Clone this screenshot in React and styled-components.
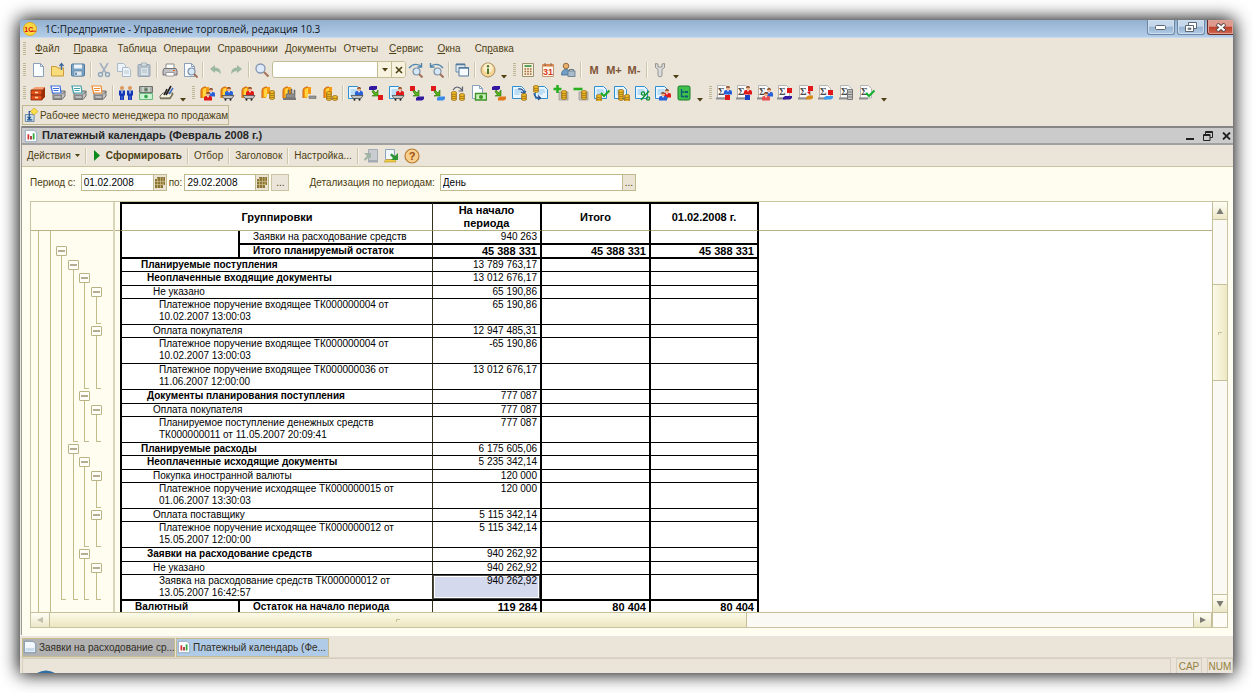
import React, { useState } from "react"
import styled, { createGlobalStyle, css } from "styled-components"

const GlobalStyle = createGlobalStyle`
  * { box-sizing: border-box; }
  body {
    margin: 0;
    background: #ffffff;
    overflow: hidden;
    font-family: "Liberation Sans", Arial, sans-serif;
    font-size: 10px;
    color: #4d3f12;
  }
  button, input {
    font: inherit;
    color: inherit;
    margin: 0;
    padding: 0;
    border: 0;
    border-radius: 0;
    background: none;
  }
`

const Desktop = styled.div`
  height: 100vh;
  padding: 20px;
`

const Window = styled.div`
  height: 100%;
  display: flex;
  flex-direction: column;
  overflow: hidden;
  background: #ebe4d9;
  box-shadow: 0 0 17px 1px #000000;
`

/* ---------- title bar ---------- */

const TitleBar = styled.header`
  flex: none;
  height: 18px;
  display: flex;
  align-items: center;
  padding-left: 3px;
  background: linear-gradient(#93b0d0, #b3cde8);
  border-bottom: 1px solid #c9dcef;
`

const WindowTitle = styled.h1`
  flex: 1;
  margin: 0 0 0 8px;
  font-family: "Open Sans", "Noto Sans", sans-serif;
  font-size: 10px;
  line-height: 16px;
  font-weight: 400;
  color: #10151c;
`

const WindowButton = styled.button`
  width: 28px;
  height: 15px;
  margin-right: 2px;
  align-self: flex-start;
  display: flex;
  align-items: center;
  justify-content: center;
  border: 1px solid #6c87a6;
  border-top: 0;
  border-radius: 0 0 3px 3px;
  background: linear-gradient(#c5d8ec 45%, #98b3d1 50%, #b2cce6);
  box-shadow: inset 0 0 0 1px #cfdff0;
  ${({ $close }) =>
    $close &&
    css`
      width: 26px;
      margin-right: 0;
      border-color: #6b2a25;
      border-right: 0;
      border-radius: 0 0 0 3px;
      background: linear-gradient(#dd9a8d 45%, #bd3f28 50%, #d0694f);
      box-shadow: inset 0 0 0 1px #dfa297;
    `}
`

/* ---------- menus and toolbars ---------- */

const MenuBar = styled.nav`
  flex: none;
  height: 20px;
  display: flex;
  align-items: center;
`

const MenuItem = styled.button`
  height: 17px;
  padding: 0 4px 0 3px;
  white-space: nowrap;
  ${({ $accel }) => $accel && `padding: 0 7px;`}
`

const Toolbar = styled.div`
  flex: none;
  height: 23px;
  display: flex;
  align-items: center;
`

const Grip = styled.span`
  flex: none;
  width: 8px;
  height: 13px;
  border: solid transparent;
  border-width: 0 2px 0 3px;
  background: repeating-linear-gradient(#bdb798 0 1px, #ebe4d9 1px 2px) padding-box;
`

const Separator = styled.span`
  flex: none;
  width: 6px;
  height: 16px;
  border: solid transparent;
  border-width: 0 2px;
  background: linear-gradient(90deg, #cbc7ac 50%, #f8f5ec 50%) padding-box;
`

const IconGroup = styled.div`
  display: flex;
  align-items: center;
`

const IconButton = styled.button`
  flex: none;
  width: 20px;
  height: 20px;
  padding: 2px;
  display: flex;
  ${({ $loose }) =>
    $loose &&
    css`
      &:nth-of-type(even) {
        width: 21px;
      }
    `}
`

const MemoryButton = styled.button`
  width: 20px;
  height: 20px;
  font-size: 11px;
  font-weight: 700;
  color: #7f5535;
`

const MoreButton = styled.button`
  width: 12px;
  height: 20px;
  display: flex;
  align-items: flex-end;
  justify-content: center;
  padding-bottom: 1px;
`

const SearchBox = styled.div`
  width: 134px;
  height: 17px;
  display: flex;
  border: 1px solid #c3bd95;
  border-radius: 3px;
  background: #ffffff;
  overflow: hidden;
`

const SearchInput = styled.input`
  flex: 1;
  min-width: 0;
  padding: 0 3px;
  outline: none;
`

const SearchButton = styled.button`
  width: 14px;
  display: flex;
  align-items: center;
  justify-content: center;
  background: #f7f3df;
  border-left: 1px solid #c3bd95;
`

const QuickPanel = styled.div`
  flex: none;
  height: 22px;
  padding: 1px 0 0 2px;
`

const QuickButton = styled.button`
  height: 20px;
  display: flex;
  align-items: center;
  gap: 2px;
  padding: 0 0 0 1px;
  border: 1px solid #c0b98e;
  white-space: nowrap;
`

/* ---------- report window ---------- */

const ReportWindow = styled.section`
  flex: 1;
  min-height: 0;
  display: flex;
  flex-direction: column;
  margin-left: 1px;
  border-left: 1px solid #9b9b9b;
  background: #fffcf0;
`

const ReportTitle = styled.div`
  flex: none;
  height: 19px;
  display: flex;
  align-items: center;
  gap: 4px;
  padding-left: 2px;
  background: #cbcbcb;
  border: solid #858585;
  border-width: 2px 0;
  border-bottom-color: #a0a0a0;
  color: #262626;
`

const ReportName = styled.h2`
  flex: 1;
  margin: 0;
  font-size: 11px;
  line-height: 15px;
  font-weight: 700;
`

const ReportTitleButton = styled.button`
  width: 14px;
  height: 14px;
  display: flex;
  align-items: center;
  justify-content: center;
`

const ReportToolbar = styled.div`
  flex: none;
  height: 22px;
  display: flex;
  align-items: center;
  padding-left: 2px;
  background: #ebe4d9;
  border-bottom: 1px solid #c9c49f;
`

const CommandButton = styled.button`
  height: 18px;
  display: flex;
  align-items: center;
  gap: 4px;
  padding: 0 3px;
  white-space: nowrap;
  ${({ $primary }) =>
    $primary &&
    css`
      font-weight: 700;
      gap: 5px;
      padding: 0 3px 0 5px;
    `}
`

const FilterForm = styled.form`
  flex: none;
  height: 34px;
  display: flex;
  align-items: center;
  padding: 0 0 3px 8px;
`

const FieldLabel = styled.label`
  white-space: nowrap;
  margin-right: ${({ $gap }) => $gap || "2px"};
`

const Field = styled.div`
  height: 17px;
  width: ${({ $width }) => $width};
  display: flex;
  margin-right: 2px;
  border: 1px solid #c0b98e;
  background: #ffffff;
`

const FieldInput = styled.input`
  flex: 1;
  min-width: 0;
  padding: 0 2px;
  color: #000000;
  outline: none;
`

const FieldButton = styled.button`
  width: 13px;
  display: flex;
  align-items: center;
  justify-content: center;
  background: #ebe4d4;
  border-left: 1px solid #c0b98e;
`

const PeriodButton = styled.button`
  width: 18px;
  height: 17px;
  margin-right: 20px;
  border: 1px solid #c9c3a4;
  background: #ebe4d9;
`

/* ---------- spreadsheet ---------- */

const Sheet = styled.div`
  flex: 1;
  min-height: 0;
  margin: 0 5px 7px 8px;
  display: grid;
  grid-template-columns: 84px 1fr 15px;
  grid-template-rows: minmax(0, 1fr) 15px;
  border: 1px solid #c9c49f;
`

const Gutter = styled.div`
  overflow: hidden;
  border-right: 2px solid #d9d6ba;
`

const GutterHead = styled.div`
  height: 29px;
  border-bottom: 1px solid #b9b184;
`

const OutlineRow = styled.div`
  height: ${({ $height }) => $height};
  padding-left: 7px;
  display: grid;
  grid-template-columns: 12px 11px 12px 11px 12px 11px;
`

const OutlineCell = styled.div`
  position: relative;
  &::before {
    content: "";
    position: absolute;
    top: ${({ $mark }) => ($mark === "-" ? "6px" : "0")};
    bottom: ${({ $mark }) => ($mark === "L" ? "1px" : "0")};
    left: 0;
    width: ${({ $mark }) => ($mark === "L" ? "4px" : "1px")};
    border-left: 1px solid #c2bb8a;
    ${({ $mark }) => $mark === "L" && `border-bottom: 1px solid #c2bb8a;`}
    ${({ $mark }) => $mark === " " && `display: none;`}
  }
`

const OutlineToggle = styled.button`
  position: absolute;
  left: -5px;
  top: 1px;
  width: 11px;
  height: 10px;
  display: flex;
  align-items: center;
  justify-content: center;
  border: 1px solid #b9b283;
  border-radius: 1px;
  background: #fffef8;
`

const Cells = styled.div`
  overflow: hidden;
  background: #ffffff;
`

const Table = styled.table`
  width: 100%;
  table-layout: fixed;
  border-collapse: separate;
  border-spacing: 0;
  line-height: 12px;
  color: #000000;
`

const Col = styled.col`
  width: ${({ $width }) => $width};
`

const HeadCell = styled.th`
  height: 29px;
  padding: 0 20px;
  font-size: 11px;
  line-height: 13px;
  font-weight: 700;
  border: solid #000000;
  border-width: 2px 2px 1px 0;
  border-bottom-color: #b9b184;
  ${({ $first }) => $first && `border-left-width: 2px; border-right-color: #33301c; border-right-width: 1px;`}
  ${({ $blank }) => $blank && `border-width: 0 0 1px; background: ${$blank};`}
`

const Cell = styled.td`
  height: ${({ $height }) => $height};
  padding: 0 3px 0 0;
  vertical-align: top;
  text-align: right;
  white-space: nowrap;
  font-size: ${({ $total }) => ($total ? "11px" : "10px")};
  font-weight: ${({ $total }) => ($total ? 700 : 400)};
  border: solid #000000;
  border-width: 0 2px 1px 0;
  ${({ $total, $thick }) => ($total || $thick) && `border-bottom-width: 2px;`}
  ${({ $selected }) =>
    $selected &&
    `background: #d4d9ee;
    box-shadow: inset 0 0 0 1px #4a4a4a, inset 0 0 0 2px #ffffff;`}
`

const LabelCell = styled(Cell)`
  text-align: left;
  padding-left: ${({ $indent }) => $indent};
  padding-right: 32px;
  white-space: normal;
  font-size: 10px;
  font-weight: ${({ $bold }) => ($bold ? 700 : 400)};
  border-left-width: ${({ $first }) => ($first ? "2px" : "0")};
  border-right-width: ${({ $narrow }) => ($narrow ? "2px" : "1px")};
  border-right-color: ${({ $narrow }) => ($narrow ? "#000000" : "#33301c")};
  ${({ $narrow, $solo }) => ($narrow || $solo) && `padding-right: 0; white-space: nowrap;`}
`

const RailCell = styled.td`
  padding: 0;
  background: ${({ $color }) => $color};
`

const ScrollBar = styled.div`
  display: flex;
  flex-direction: ${({ $vertical }) => ($vertical ? "column" : "row")};
  background: #faf9f4;
  border: solid #c5c09a;
  border-width: ${({ $vertical }) => ($vertical ? "0 0 0 1px" : "1px 0 0")};
  ${({ $vertical }) => !$vertical && `grid-column: 1 / 3;`}
`

const ScrollArrow = styled.button`
  flex: none;
  width: ${({ $vertical }) => ($vertical ? "14px" : "19px")};
  height: ${({ $vertical }) => ($vertical ? "18px" : "14px")};
  display: flex;
  align-items: center;
  justify-content: center;
  background: linear-gradient(#fffef5, #ebe7c8);
  border: solid #c5c09a;
  border-width: ${({ $vertical, $end }) =>
    $vertical ? ($end ? "1px 0 0" : "0 0 1px") : $end ? "0 1px" : "0 1px 0 0"};
`

const ScrollTrack = styled.div`
  flex: 1;
  min-height: 0;
  display: flex;
  flex-direction: ${({ $vertical }) => ($vertical ? "column" : "row")};
`

const ScrollThumb = styled.div`
  display: flex;
  align-items: center;
  justify-content: center;
  border: solid #c5c09a;
  ${({ $vertical }) =>
    $vertical
      ? `margin-top: 64px; height: 97px; border-width: 1px 0; background: linear-gradient(90deg, #fcfae8, #ece8c4);`
      : `width: 61%; border-width: 0 1px 0 0; background: linear-gradient(#fcfae8, #ebe6bf);`}
`

const Corner = styled.div`
  border: solid #c5c09a;
  border-width: 1px 0 0 1px;
  background: #fdfcf6;
`

/* ---------- window list and status bar ---------- */

const WindowList = styled.div`
  flex: none;
  height: 22px;
  display: flex;
  align-items: center;
  gap: 1px;
  padding: 1px 0 0 2px;
  border-top: 1px solid #fdfdfd;
`

const WindowTab = styled.button`
  width: 153px;
  height: 19px;
  display: flex;
  align-items: center;
  gap: 2px;
  border: 1px solid #c4bc8e;
  color: #302c22;
  background: ${({ $active }) => ($active ? "#b0cbe7" : "#b2b2b2")};
  white-space: nowrap;
`

const StatusBar = styled.footer`
  flex: none;
  height: 16px;
  display: flex;
  gap: 5px;
  padding-left: 2px;
  border-top: 1px solid #dbd4c7;
`

const StatusPanel = styled.div`
  width: 26px;
  display: flex;
  align-items: center;
  justify-content: center;
  color: #94813f;
  border: 1px solid #d6cfc0;
  border-bottom: 0;
  ${({ $wide }) =>
    $wide &&
    css`
      flex: 1;
      align-items: flex-end;
      justify-content: flex-start;
      padding-left: 14px;
    `}
`

/* ---------- icon parts ---------- */

const Svg = styled.svg`
  display: block;
  flex: none;
`

const Icon = ({ size = 16, children }) => (
  <Svg width={size} height={size} viewBox="0 0 16 16" fill="none" aria-hidden="true">
    {children}
  </Svg>
)

const Page = ({ x = 0, y = 0, stroke = "#8aa0b8", fill = "#fafdff" }) => (
  <g transform={`translate(${x} ${y})`}>
    <path d="M.5.5h7l3 3v10H.5z" fill={fill} stroke={stroke} />
    <path d="M7.5.5v3h3" stroke={stroke} />
  </g>
)

const BluePage = () => (
  <g>
    <path d="M.5 1.500h9l3 3v9H.5z" fill="#eaf6ff" stroke="#2f8fd0" />
    <path d="M2.500 5h7M2.500 7h8M2.500 9h5" stroke="#8cc4ea" />
  </g>
)

const Person = ({ x, y, color }) => (
  <g transform={`translate(${x} ${y})`}>
    <path d="M0 8.500V5.500Q0 4 2 4h4q2 0 2 1.500v3z" fill={color} />
    <path d="M3 4h2L4 6z" fill="#fff" />
    <circle cx="4" cy="2.200" r="1.900" fill="#f0b48a" />
    <path d="M2 2Q2 0 4 0t2 2q-2-1-4 0z" fill="#7a3d1c" />
  </g>
)

const Coins = ({ x, y, n = 3 }) => (
  <g transform={`translate(${x} ${y})`}>
    {Array.from({ length: n }, (_, i) => (
      <ellipse key={i} cx="3" cy={(n - i) * 2} rx="2.700" ry="1.400" fill="#f7c52c" stroke="#8a5a08" strokeWidth=".7" />
    ))}
  </g>
)

const Gold = () => (
  <g>
    <path d="M2 13V6q0-4 5-4h3v7H6v4z" fill="#f89a12" />
    <path d="M4 12V6q0-3 3-3v9z" fill="#ffd640" />
    <path d="M2 13V6q0-4 5-4" stroke="#c9600a" />
  </g>
)

const Cart = () => (
  <g>
    <path d="M3 10.500h12l-2 3H5z" fill="#c4c4c4" stroke="#4c4c4c" strokeWidth=".8" />
    <circle cx="6.500" cy="14.800" r="1" fill="#222" />
    <circle cx="11.500" cy="14.800" r="1" fill="#222" />
  </g>
)

const Flow = ({ a, b }) => (
  <g>
    <path d={a === "#e01818" ? "M1 1h5v5H1z" : "M1 2l2-1h6v3l-2 1H1z"} fill={a} />
    <path d="M5 5l3 3 2-3v6H4l2.500-1.500L4 7z" fill="#57b51b" stroke="#246b06" strokeWidth=".6" />
    <path d={b === "#e01818" ? "M10 10h5v5h-5z" : "M7 13l2-1.500h6V14l-2 1.500H7z"} fill={b} />
  </g>
)

const Printer = ({ color }) => (
  <g>
    <path d="M3 8l3-2h9v5l-3 3.500H3z" fill="#c2c2c2" stroke="#555" strokeWidth=".8" />
    <path d="M3.500 9.500H12v5H3.500z" fill="#858585" />
    <path d="M12 9.500l3-3" stroke="#666" />
    <path d="M4.500 12h6" stroke="#eee" />
    <path d="M1 1h9l1 7H2.500z" fill="#fff" stroke={color} strokeWidth="1.200" />
    <path d="M3 3.500h6M3.500 5.500h5" stroke={color} strokeWidth="1.200" />
  </g>
)

const SigmaPage = ({ children }) => (
  <>
    <path d="M1.500.5h8l3 3v9.500h-11z" fill="#fafafa" stroke="#b5b5b5" />
    <text x="2" y="10" fontSize="10" fontWeight="700" fontFamily="Liberation Serif, serif" fill="#4a4a4a">
      Σ
    </text>
    <path d="M0 13.500h9" stroke="#8e8e8e" strokeWidth="2" />
    {children}
  </>
)

const Lens = ({ x = 0, y = 0 }) => (
  <g transform={`translate(${x} ${y})`}>
    <circle cx="4.500" cy="4.500" r="3.500" fill="#d6e8f8" stroke="#7f93a8" strokeWidth="1.200" />
    <path d="M7 7l3.500 3.500" stroke="#a0705a" strokeWidth="2" />
  </g>
)

const RED = "#e01818"
const BLUE = "#2860d8"
const NAVY = "#3018a0"

const icons = {
  create: <Page x={3} y={1} />,
  open: (
    <>
      <path d="M1.500 4.500h5l1 1.500h6v8h-12z" fill="#f9dc7c" stroke="#c99b3a" />
      <path d="M11.500 8V1.500M9.500 4l2-2.500 2 2.500" stroke="#3c6a9e" strokeWidth="1.300" />
    </>
  ),
  save: (
    <>
      <rect x="1.500" y="2" width="13" height="12" rx="1" fill="#7ba3c4" stroke="#50799c" />
      <path d="M4 2.500h8v4H4z" fill="#eef5fa" />
      <path d="M4 9h8v5H4z" fill="#dfe9f0" stroke="#50799c" strokeWidth=".6" />
      <path d="M6 10.500v2.500" stroke="#50799c" strokeWidth="1.500" />
    </>
  ),
  cut: (
    <>
      <path d="M4 1l6 10M12 1L6 11" stroke="#a3b1bf" strokeWidth="1.600" />
      <circle cx="4.500" cy="12.500" r="2" stroke="#8ea6bd" strokeWidth="1.400" />
      <circle cx="11.500" cy="12.500" r="2" stroke="#8ea6bd" strokeWidth="1.400" />
    </>
  ),
  copy: (
    <>
      <path d="M1.500 1.500h6l2 2v6h-8z" fill="#edf3f8" stroke="#a9bac9" />
      <path d="M6.500 5.500h6l2 2v7h-8z" fill="#edf3f8" stroke="#a9bac9" />
      <path d="M8 9h5M8 11h5" stroke="#b9c9d7" />
    </>
  ),
  paste: (
    <>
      <rect x="2" y="2.500" width="12" height="12" rx="1" fill="#b6c0ca" stroke="#97a5b2" />
      <rect x="5.500" y="1" width="5" height="3" fill="#d7dde3" stroke="#97a5b2" strokeWidth=".7" />
      <path d="M5 6h7v7H5z" fill="#dde5ec" />
      <path d="M6 8h5M6 10h5" stroke="#aebbc7" />
    </>
  ),
  print: (
    <>
      <path d="M4 2h8v5H4z" fill="#fff" stroke="#8c8c8c" />
      <path d="M2 6.500h12l1 2.500v4H1V9z" fill="#c2c2c4" stroke="#707074" />
      <path d="M4 10.500h8V14H4z" fill="#fff" stroke="#8c8c8c" strokeWidth=".8" />
      <path d="M11 8.500h2" stroke="#e06010" />
    </>
  ),
  preview: (
    <>
      <Page x={2} y={1} />
      <Lens x={5} y={5} />
    </>
  ),
  undo: <path d="M2 7l5-4v2.500q6 0 6 7-2-3.500-6-3.500v2z" fill="#9db8a0" />,
  redo: <path d="M14 7L9 3v2.500q-6 0-6 7 2-3.500 6-3.500v2z" fill="#9db8a0" />,
  search: (
    <>
      <circle cx="6.500" cy="6.500" r="4.500" fill="#dceafa" stroke="#8796b4" strokeWidth="1.300" />
      <path d="M10 10l4.500 4.500" stroke="#a8785c" strokeWidth="2.200" />
    </>
  ),
  findNext: (
    <>
      <Lens x={4} y={5} />
      <path d="M1 6q5-6 12-2M13.500 1v4h-4" stroke="#4e86ad" strokeWidth="1.400" />
    </>
  ),
  findPrev: (
    <>
      <Lens x={5} y={5} />
      <path d="M15 6Q10 0 3 4M2.500 1v4h4" stroke="#4e86ad" strokeWidth="1.400" />
    </>
  ),
  windows: (
    <>
      <path d="M2 2h9v8H2z" fill="#dbe7f0" stroke="#6f8ea8" />
      <path d="M5 5.500h9.500V14H5z" fill="#f7fbff" stroke="#56799a" />
      <path d="M2 2.500h9M5 6h9.500" stroke="#56799a" strokeWidth="1.600" />
    </>
  ),
  info: (
    <>
      <circle cx="8" cy="8" r="7" fill="#f6d596" stroke="#a88d5c" />
      <circle cx="8" cy="6" r="4.500" fill="#fdf0cf" />
      <circle cx="8" cy="4.300" r="1.200" fill="#4d7a2c" />
      <path d="M8 6.500v5.500" stroke="#4d7a2c" strokeWidth="2" />
    </>
  ),
  calc: (
    <>
      <path d="M2.500 1.500h11v13h-11z" fill="#f6f0dc" stroke="#9b9070" />
      <path d="M4.500 4h7" stroke="#2f8f3a" strokeWidth="1.600" />
      <path d="M4.500 7h7M4.500 9.500h7M4.500 12h7" stroke="#a8612e" strokeWidth="1.400" strokeDasharray="1.600 1.100" />
    </>
  ),
  calendar: (
    <>
      <path d="M2.500 2.500h11v12h-11z" fill="#fff8ea" stroke="#c29670" />
      <path d="M2.500 3.500h11" stroke="#e07c3c" strokeWidth="2" />
      <path d="M5 1v3M11 1v3" stroke="#8a6a50" />
      <text x="3" y="13" fontSize="9" fontWeight="700" fontFamily="Liberation Sans, sans-serif" fill="#d83a1c">
        31
      </text>
    </>
  ),
  user: (
    <>
      <circle cx="6" cy="4" r="2.800" fill="#e7b06c" stroke="#80592c" strokeWidth=".8" />
      <path d="M1.500 13q0-5.500 4.500-5.500T10 13z" fill="#6fa0c8" stroke="#40688c" strokeWidth=".8" />
      <rect x="8" y="9" width="7" height="5.500" fill="#a9bccb" stroke="#5f7587" strokeWidth=".8" />
      <path d="M9.500 9V7.500h4V9" stroke="#5f7587" />
    </>
  ),
  wrench: (
    <path
      d="M3.500 1.500v4L6 7.500V13q0 1.800 2 1.800t2-1.800V7.500l2.500-2v-4l-2.500.5v3H6V2z"
      fill="#dcdcdc"
      stroke="#8a8a8a"
      strokeWidth=".9"
    />
  ),
  cabinet: (
    <>
      <path d="M1 5l4-3h10l-3 3z" fill="#f7a070" />
      <path d="M1 5h11v10H1z" fill="#e2501c" stroke="#7d2305" strokeWidth=".8" />
      <path d="M12 5l3-3v10l-3 3z" fill="#9a2c08" />
      <path d="M1 10h11" stroke="#7d2305" />
      <path d="M5 7.500h3M5 12.500h3" stroke="#ffd9a8" strokeWidth="1.400" />
    </>
  ),
  printBlue: <Printer color="#3c6ee0" />,
  printTeal: <Printer color="#3fa0a8" />,
  printOrange: <Printer color="#f08a30" />,
  people: (
    <>
      <circle cx="4" cy="3" r="2" fill="#d89860" />
      <circle cx="12" cy="3" r="2" fill="#d89860" />
      <path d="M1 5.500h6v5H6V15H2v-4.500H1zM9 5.500h6v5h-1V15h-4v-4.500H9z" fill="#1238b8" />
      <path d="M4 5.500v3M12 5.500v3" stroke="#fff" />
      <path d="M4 11v4M12 11v4" stroke="#7e94e0" strokeWidth=".7" />
    </>
  ),
  money: (
    <>
      <path d="M1.500 1.500h13v6h-13z" fill="#a9ada9" stroke="#6c726c" />
      <path d="M1.500 8.500h13v6h-13z" fill="#c4f0cc" stroke="#6db87c" />
      <path d="M5 9v5M11 9v5M5 2v5M11 2v5" stroke="#e4f4e6" />
      <circle cx="8" cy="4.500" r="1.600" fill="#5c7a5c" />
      <circle cx="8" cy="11.500" r="1.800" fill="#2fa84a" />
    </>
  ),
  ledger: (
    <>
      <path d="M1 11l3-3h10l-3 5H1z" fill="#f4f0dc" stroke="#555" strokeWidth=".8" />
      <path d="M1 13.500h10l3-5" stroke="#7a7458" strokeWidth="1.500" />
      <path d="M12 1L7 10M8 4l-3 6" stroke="#222" strokeWidth="1.600" />
      <path d="M14 3l-4 6" stroke="#3868c0" strokeWidth="1.400" />
    </>
  ),
  goldPeople: (
    <>
      <Gold />
      <Person x={8} y={3} color={BLUE} />
      <Person x={5} y={7} color={RED} />
    </>
  ),
  goldCartBlue: (
    <>
      <Gold />
      <Person x={6} y={2} color={BLUE} />
      <Cart />
    </>
  ),
  goldCartRed: (
    <>
      <Gold />
      <Person x={6} y={2} color={RED} />
      <Cart />
    </>
  ),
  goldCoins: (
    <>
      <Gold />
      <Coins x={9} y={5} n={4} />
    </>
  ),
  goldPlant: (
    <>
      <Gold />
      <path d="M5 13V9h2V5h1v4h2V4h1v5h2V5h1v8z" fill="#8f8f8f" stroke="#444" strokeWidth=".5" />
      <path d="M2 14h13" stroke="#777" strokeWidth="2" />
    </>
  ),
  goldLine: (
    <>
      <Gold />
      <path d="M8 11h7v2.500H8z" fill="#999" stroke="#666" strokeWidth=".6" />
    </>
  ),
  goldStack: (
    <>
      <Gold />
      <Coins x={4} y={6} n={4} />
      <Coins x={10} y={10} n={2} />
    </>
  ),
  pageCartBlue: (
    <>
      <BluePage />
      <Person x={7} y={2} color={BLUE} />
      <Cart />
    </>
  ),
  pageCartRed: (
    <>
      <BluePage />
      <Person x={7} y={2} color={RED} />
      <Cart />
    </>
  ),
  flowPurpleRed: <Flow a={NAVY} b={RED} />,
  flowRedNavy: <Flow a={RED} b={NAVY} />,
  flowRedBlue: <Flow a={RED} b="#3a8ae8" />,
  flowPurpleOrange: <Flow a={NAVY} b="#e07818" />,
  coinMove: (
    <>
      <Coins x={1} y={6} n={4} />
      <Coins x={9} y={8} n={3} />
      <path d="M3 5q4-6 9 0M12.500 1.500V6H8.500" stroke="#5a6070" strokeWidth="1.200" />
    </>
  ),
  pageCash: (
    <>
      <Page x={1} y={0} />
      <path d="M4.500 8.500h11V15h-11z" fill="#c8f0b8" stroke="#3e9428" strokeWidth="1.400" />
      <circle cx="10" cy="12" r="2" fill="#3e9428" />
    </>
  ),
  pageArrowCoins: (
    <>
      <BluePage />
      <path d="M6 4q5-1 6 4M14 6l-2 3-3-2" stroke="#2a4f90" strokeWidth="1.200" />
      <Coins x={9} y={8} n={3} />
    </>
  ),
  pageBack: (
    <>
      <g transform="translate(3 0)">
        <BluePage />
      </g>
      <Coins x={1} y={0} n={3} />
      <path d="M2 8q0 5 6 5M6 10.500l2.500 2.500L6 15" stroke="#2a4f90" strokeWidth="1.200" />
    </>
  ),
  coinsPlus: (
    <>
      <path d="M6 7h9v8H6z" fill="#c8c4b8" stroke="#888" strokeWidth=".6" />
      <Coins x={8} y={5} n={4} />
      <path d="M4.500 0v8M.5 4h8" stroke="#28b020" strokeWidth="2.600" />
    </>
  ),
  coinsMinus: (
    <>
      <path d="M6 7h9v8H6z" fill="#c8c4b8" stroke="#888" strokeWidth=".6" />
      <Coins x={8} y={5} n={4} />
      <path d="M.5 4h9" stroke="#28b020" strokeWidth="2.600" />
    </>
  ),
  pageCheck: (
    <>
      <BluePage />
      <Coins x={2} y={9} n={3} />
      <path d="M7 8l3 3 5.500-5.500" stroke="#22a828" strokeWidth="2.200" />
    </>
  ),
  pageStack: (
    <>
      <BluePage />
      <Coins x={4} y={4} n={5} />
      <Coins x={10} y={9} n={3} />
    </>
  ),
  pagePercent: (
    <>
      <BluePage />
      <path d="M6 15l8-9" stroke="#149030" strokeWidth="1.500" />
      <circle cx="8" cy="8.500" r="1.600" stroke="#149030" strokeWidth="1.300" />
      <circle cx="13" cy="13.500" r="1.600" stroke="#149030" strokeWidth="1.300" />
    </>
  ),
  pagePeople: (
    <>
      <BluePage />
      <Person x={8} y={4} color={RED} />
      <Person x={4} y={7} color={BLUE} />
    </>
  ),
  tree: (
    <>
      <rect x="2" y="1" width="12" height="14" rx="1.500" fill="#3fc04c" stroke="#1a7c28" />
      <path d="M5.500 4v7.500h3M5.500 7h3" stroke="#0d5c70" strokeWidth="1.300" />
      <path d="M9 7h3M9 11.500h3" stroke="#0d5c70" strokeWidth="2" />
    </>
  ),
  sigmaBlue: (
    <SigmaPage>
      <path d="M9 10h5v5H9z" fill={RED} />
      <Person x={8} y={1} color={BLUE} />
    </SigmaPage>
  ),
  sigmaRed: (
    <SigmaPage>
      <path d="M9 10h5v5H9z" fill="#1840c8" />
      <Person x={8} y={1} color={RED} />
    </SigmaPage>
  ),
  sigmaPeople: (
    <SigmaPage>
      <Person x={8} y={3} color={BLUE} />
      <Person x={5} y={7} color="#e85050" />
    </SigmaPage>
  ),
  sigmaNavy: (
    <SigmaPage>
      <path d="M10 3h5v5h-5z" fill={RED} />
      <path d="M6 12.500L8 11h7v2l-2 1.500H6z" fill={NAVY} />
    </SigmaPage>
  ),
  sigmaGold: (
    <SigmaPage>
      <path d="M10 1h5v5h-5zM9 7l3-1v4z" fill={RED} />
      <path d="M8 12.500l2-2h5v2.500l-2 1.500H8z" fill="#d88a14" />
    </SigmaPage>
  ),
  sigmaSky: (
    <SigmaPage>
      <path d="M10 5h5v5h-5z" fill={RED} />
      <path d="M6 12.500L8 11h7v2l-2 1.500H6z" fill="#3a9cf0" />
    </SigmaPage>
  ),
  sigmaRack: (
    <SigmaPage>
      <path d="M8.500 4.500h5v10h-5z" fill="#c8c8c8" stroke="#777" />
      <path d="M9 7h5M9 9.500h5M9 12h5" stroke="#777" />
    </SigmaPage>
  ),
  sigmaCheck: (
    <SigmaPage>
      <path d="M7 8l3 3 5.500-5.500" stroke="#18b030" strokeWidth="2.200" />
    </SigmaPage>
  ),
  logo: (
    <>
      <circle cx="8" cy="8" r="7.500" fill="#fbd743" stroke="#e0a81c" />
      <text x="1.500" y="11" fontSize="8" fontWeight="700" fontFamily="Liberation Sans, sans-serif" fill="#d81414">
        1С
      </text>
      <path d="M9 10.500h6" stroke="#d81414" />
    </>
  ),
  report: (
    <>
      <path d="M1.500 1.500h10l3 3v10h-13z" fill="#fdfeff" stroke="#8ea4bb" />
      <path d="M5 6v6" stroke="#d83030" strokeWidth="2" />
      <path d="M8 8v4" stroke="#a03030" strokeWidth="2" />
      <path d="M11 5v7" stroke="#30a840" strokeWidth="2" />
    </>
  ),
  form: (
    <>
      <path d="M1.500 1.500h10l3 3v10h-13z" fill="#f4f8fc" stroke="#6f8aa5" />
      <path d="M3 9h10v4H3z" fill="#c9dcec" />
    </>
  ),
  workplace: (
    <>
      <path d="M1.500 7.500h10v8h-10z" fill="#cfe0ee" stroke="#5a7d9c" />
      <path d="M6 12.500V4h3M4 10l2 2.500L8 10M3.500 13.500h6" stroke="#1d4c86" strokeWidth="1.300" />
      <path d="M11.500 0L16 4l-4.500 4L7.500 4z" fill="#fbe04a" stroke="#c8a81c" strokeWidth=".8" />
    </>
  ),
  restoreSettings: (
    <>
      <path d="M5.500 1.500h9v11h-9z" fill="#c9cdd2" stroke="#a4abb3" />
      <path d="M5 13.500h10" stroke="#a4abb3" strokeWidth="2" />
      <path d="M1 5h7v6L6 9l-4 4-1-2 3-3z" fill="#9fb3a6" />
    </>
  ),
  saveSettings: (
    <>
      <path d="M2.500 1.500h9v10h-9z" fill="#f2f7fb" stroke="#8ea4bb" />
      <path d="M1 14l2-2.500h9l1 2.500z" fill="#f0cc44" stroke="#b8962a" strokeWidth=".6" />
      <path d="M15 12H8l2-2-3-3 1.500-1.500L12 8l3-3z" fill="#2f9434" />
    </>
  ),
  help: (
    <>
      <circle cx="8" cy="8" r="7" fill="#f8cf8c" stroke="#b67a38" strokeWidth="1.200" />
      <text x="4.700" y="12" fontSize="11" fontWeight="700" fontFamily="Liberation Sans, sans-serif" fill="#9c4a10">
        ?
      </text>
    </>
  ),
}

const Down = () => (
  <Svg width="8" height="5" viewBox="0 0 8 5" aria-hidden="true">
    <path d="M1 1h6L4 4.500z" fill="#4d3f12" />
  </Svg>
)

const ScrollGlyph = ({ d, color = "#7b7b74" }) => (
  <Svg width="8" height="8" viewBox="0 0 8 8" aria-hidden="true">
    <path d={d} fill={color} />
  </Svg>
)

const CalendarGlyph = () => (
  <Svg width="10" height="11" viewBox="0 0 10 11" aria-hidden="true">
    <path d="M2 0h8v8H8v3H0V2h2z" fill="#8b7436" />
    <path d="M0 4.500h10M0 7.500h9M2.500 1v10M5.500 0v11M8 0v9" stroke="#d9cc98" strokeWidth=".6" />
  </Svg>
)

/* ---------- data ---------- */

const menu = [
  ["", "Ф", "айл"],
  ["", "П", "равка"],
  ["Таблица"],
  ["Операции"],
  ["Справочники"],
  ["Документы"],
  ["Отчеты"],
  ["", "С", "ервис"],
  ["", "О", "кна"],
  ["Сп", "р", "авка"],
]

const standardGroups = [
  ["create", "open", "save"],
  ["cut", "copy", "paste"],
  ["print", "preview"],
  ["undo", "redo"],
  ["search"],
]

const tradeGroups = [
  ["cabinet", "printBlue", "printTeal", "printOrange"],
  ["people", "money", "ledger"],
]

const purchaseGroups = [
  ["goldPeople", "goldCartBlue", "goldCartRed", "goldCoins", "goldPlant", "goldLine", "goldStack"],
  [
    "pageCartBlue",
    "flowPurpleRed",
    "pageCartRed",
    "flowRedNavy",
    "flowRedBlue",
    "coinMove",
    "pageCash",
    "flowPurpleOrange",
    "pageArrowCoins",
    "pageBack",
    "coinsPlus",
    "coinsMinus",
    "pageCheck",
    "pageStack",
    "pagePercent",
    "pagePeople",
    "tree",
  ],
]

const reportGroups = [
  ["sigmaBlue", "sigmaRed", "sigmaPeople", "sigmaNavy", "sigmaGold", "sigmaSky", "sigmaRack", "sigmaCheck"],
]

// tree: one mark per outline level, "-" opens a group, "|" continues it, "L" closes it
const rows = [
  { tree: "||    ", height: "14px", kind: "part", side: "", sideSpan: 2, label: "Заявки на расходование средств", values: ["940 263", "", ""] },
  { tree: "||-   ", height: "14px", kind: "total", label: "Итого планируемый остаток", values: ["45 388 331", "45 388 331", "45 388 331"] },
  { tree: "|||-  ", height: "13px", level: 0, label: "Планируемые поступления", values: ["13 789 763,17"] },
  { tree: "||||- ", height: "14px", level: 1, label: "Неоплаченные входящие документы", values: ["13 012 676,17"] },
  { tree: "|||||-", height: "13px", level: 2, label: "Не указано", values: ["65 190,86"] },
  { tree: "|||||L", height: "26px", level: 3, label: "Платежное поручение входящее ТК000000004 от 10.02.2007 13:00:03", values: ["65 190,86"] },
  { tree: "|||||-", height: "13px", level: 2, label: "Оплата покупателя", values: ["12 947 485,31"] },
  { tree: "||||||", height: "26px", level: 3, label: "Платежное поручение входящее ТК000000004 от 10.02.2007 13:00:03", values: ["-65 190,86"] },
  { tree: "||||LL", height: "26px", level: 3, label: "Платежное поручение входящее ТК000000036 от 11.06.2007 12:00:00", values: ["13 012 676,17"] },
  { tree: "||||- ", height: "14px", level: 1, label: "Документы планирования поступления", values: ["777 087"] },
  { tree: "|||||-", height: "13px", level: 2, label: "Оплата покупателя", values: ["777 087"] },
  { tree: "|||LLL", height: "26px", level: 3, label: "Планируемое поступление денежных средств ТК000000011 от 11.05.2007 20:09:41", values: ["777 087"] },
  { tree: "|||-  ", height: "13px", level: 0, label: "Планируемые расходы", values: ["6 175 605,06"] },
  { tree: "||||- ", height: "14px", level: 1, label: "Неоплаченные исходящие документы", values: ["5 235 342,14"] },
  { tree: "|||||-", height: "13px", level: 2, label: "Покупка иностранной валюты", values: ["120 000"] },
  { tree: "|||||L", height: "26px", level: 3, label: "Платежное поручение исходящее ТК000000015 от 01.06.2007 13:30:03", values: ["120 000"] },
  { tree: "|||||-", height: "13px", level: 2, label: "Оплата поставщику", values: ["5 115 342,14"] },
  { tree: "||||LL", height: "26px", level: 3, label: "Платежное поручение исходящее ТК000000012 от 15.05.2007 12:00:00", values: ["5 115 342,14"] },
  { tree: "||||- ", height: "14px", level: 1, label: "Заявки на расходование средств", values: ["940 262,92"] },
  { tree: "|||||-", height: "13px", level: 2, label: "Не указано", values: ["940 262,92"] },
  { tree: "||LLLL", height: "26px", level: 3, last: true, label: "Заявка на расходование средств ТК000000012 от 13.05.2007 16:42:57", values: ["940 262,92"] },
  { tree: "||    ", height: "12px", kind: "total", open: true, side: "Валютный", sideSpan: 1, label: "Остаток на начало периода", values: ["119 284", "80 404", "80 404"] },
]

const indents = ["19px", "25px", "31px", "37px"]

function IconGroups({ groups, loose }) {
  return groups.map((group, i) => (
    <React.Fragment key={group[0]}>
      {i > 0 && <Separator />}
      <IconGroup>
        {group.map(name => (
          <IconButton key={name} type="button" aria-label={name} $loose={loose}>
            <Icon>{icons[name]}</Icon>
          </IconButton>
        ))}
      </IconGroup>
    </React.Fragment>
  ))
}

function More() {
  return (
    <MoreButton type="button" aria-label="more">
      <Down />
    </MoreButton>
  )
}

function SheetRow({ row, index, selected, onSelect }) {
  const total = row.kind === "total"
  const values = row.kind ? row.values : [row.values[0], "", ""]
  return (
    <tr>
      <RailCell $color="#fffcf0" />
      {row.kind && row.sideSpan && (
        <LabelCell rowSpan={row.sideSpan} $first $narrow $bold $thick $indent="13px" $height={row.height}>
          {row.side}
        </LabelCell>
      )}
      {row.kind ? (
        <LabelCell $solo $bold={total} $thick $indent="13px" $height={row.height}>
          {row.label}
        </LabelCell>
      ) : (
        <LabelCell
          colSpan={2}
          $first
          $bold={row.level < 2}
          $thick={row.last}
          $indent={indents[row.level]}
          $height={row.height}
        >
          {row.label}
        </LabelCell>
      )}
      {values.map((value, i) => (
        <Cell
          key={i}
          $height={row.height}
          $total={total}
          $thick={row.last || row.kind}
          $selected={selected === `${index}:${i}`}
          onClick={() => onSelect(`${index}:${i}`)}
        >
          {value}
        </Cell>
      ))}
      <RailCell $color="#ffffff" />
    </tr>
  )
}

export default function App() {
  const [selected, setSelected] = useState("20:0")
  const [from, setFrom] = useState("01.02.2008")
  const [to, setTo] = useState("29.02.2008")
  const [detail, setDetail] = useState("День")

  return (
    <Desktop>
      <GlobalStyle />
      <Window>
        <TitleBar>
          <Icon size={14}>{icons.logo}</Icon>
          <WindowTitle>1С:Предприятие - Управление торговлей, редакция 10.3</WindowTitle>
          <WindowButton aria-label="minimize">
            <Svg width="12" height="5" viewBox="0 0 12 5">
              <rect x=".5" y=".5" width="10" height="4" rx="1" fill="#fff" stroke="#5c6670" />
            </Svg>
          </WindowButton>
          <WindowButton aria-label="restore">
            <Svg width="12" height="11" viewBox="0 0 12 11">
              <path d="M3.500.5h8v6h-8z" fill="#fff" stroke="#5c6670" />
              <path d="M.5 3.500h8v6h-8z" fill="#fff" stroke="#5c6670" />
              <path d="M3 6h3v1.500H3z" fill="#7d93ab" stroke="#5c6670" strokeWidth=".7" />
            </Svg>
          </WindowButton>
          <WindowButton aria-label="close" $close>
            <Svg width="12" height="9" viewBox="0 0 12 9">
              <path d="M2 1l8 7M10 1L2 8" stroke="#5c4a4a" strokeWidth="4" />
              <path d="M2.500 1.500l7 6M9.500 1.500l-7 6" stroke="#fff" strokeWidth="2.200" />
            </Svg>
          </WindowButton>
        </TitleBar>

        <MenuBar>
          <Grip />
          {menu.map(([head, key, tail]) => (
            <MenuItem key={head + key} type="button" $accel={Boolean(key)}>
              {head}
              {key && <u>{key}</u>}
              {tail}
            </MenuItem>
          ))}
        </MenuBar>

        <Toolbar>
          <Grip />
          <IconGroups groups={standardGroups} />
          <SearchBox>
            <SearchInput aria-label="search text" />
            <SearchButton type="button" aria-label="history">
              <Down />
            </SearchButton>
            <SearchButton type="button" aria-label="clear">
              <Svg width="8" height="8" viewBox="0 0 8 8">
                <path d="M1 1l6 6M7 1L1 7" stroke="#4d3f12" strokeWidth="1.600" />
              </Svg>
            </SearchButton>
          </SearchBox>
          <IconGroups groups={[["findNext", "findPrev"], ["windows"], ["info"]]} />
          <More />
          <Grip />
          <IconGroups groups={[["calc", "calendar", "user"]]} />
          <Separator />
          <MemoryButton type="button">M</MemoryButton>
          <MemoryButton type="button">M+</MemoryButton>
          <MemoryButton type="button">M-</MemoryButton>
          <Separator />
          <IconGroups groups={[["wrench"]]} />
          <More />
        </Toolbar>

        <Toolbar>
          <Grip />
          <IconGroups groups={tradeGroups} loose />
          <More />
          <Grip />
          <IconGroups groups={purchaseGroups} loose />
          <More />
          <Grip />
          <IconGroups groups={reportGroups} loose />
          <More />
        </Toolbar>

        <QuickPanel>
          <QuickButton type="button">
            <Icon size={14}>{icons.workplace}</Icon>
            Рабочее место менеджера по продажам
          </QuickButton>
        </QuickPanel>

        <ReportWindow>
          <ReportTitle>
            <Icon size={14}>{icons.report}</Icon>
            <ReportName>Платежный календарь (Февраль 2008 г.)</ReportName>
            <ReportTitleButton aria-label="minimize report">
              <Svg width="8" height="9" viewBox="0 0 8 9">
                <path d="M0 8h8" stroke="#222" strokeWidth="2" />
              </Svg>
            </ReportTitleButton>
            <ReportTitleButton aria-label="restore report">
              <Svg width="10" height="10" viewBox="0 0 10 10" fill="none" stroke="#222">
                <path d="M2.500 3V.5h7v6H7M.5 3.500H7v6H.5zM.5 4.500H7M3 1.500h6" />
              </Svg>
            </ReportTitleButton>
            <ReportTitleButton aria-label="close report">
              <Svg width="9" height="8" viewBox="0 0 9 8">
                <path d="M1 .5l7 7M8 .5l-7 7" stroke="#222" strokeWidth="1.800" />
              </Svg>
            </ReportTitleButton>
          </ReportTitle>

          <ReportToolbar>
            <CommandButton type="button">
              Действия
              <Svg width="5" height="3" viewBox="0 0 5 3">
                <path d="M0 0h5L2.500 3z" fill="#4d3f12" />
              </Svg>
            </CommandButton>
            <Separator />
            <CommandButton type="button" $primary>
              <Svg width="7" height="11" viewBox="0 0 7 11">
                <path d="M0 0l6 5.500L0 11z" fill="#0b8a1c" />
              </Svg>
              Сформировать
            </CommandButton>
            <Separator />
            <CommandButton type="button">Отбор</CommandButton>
            <Separator />
            <CommandButton type="button">Заголовок</CommandButton>
            <Separator />
            <CommandButton type="button">Настройка...</CommandButton>
            <Separator />
            <IconGroups groups={[["restoreSettings", "saveSettings", "help"]]} loose />
          </ReportToolbar>

          <FilterForm onSubmit={e => e.preventDefault()}>
            <FieldLabel htmlFor="from" $gap="5px">
              Период с:
            </FieldLabel>
            <Field $width="86px">
              <FieldInput id="from" value={from} onChange={e => setFrom(e.target.value)} />
              <FieldButton type="button" aria-label="pick start date">
                <CalendarGlyph />
              </FieldButton>
            </Field>
            <FieldLabel htmlFor="to">по:</FieldLabel>
            <Field $width="85px">
              <FieldInput id="to" value={to} onChange={e => setTo(e.target.value)} />
              <FieldButton type="button" aria-label="pick end date">
                <CalendarGlyph />
              </FieldButton>
            </Field>
            <PeriodButton type="button">...</PeriodButton>
            <FieldLabel htmlFor="detail" $gap="5px">
              Детализация по периодам:
            </FieldLabel>
            <Field $width="196px">
              <FieldInput id="detail" value={detail} onChange={e => setDetail(e.target.value)} />
              <FieldButton type="button">...</FieldButton>
            </Field>
          </FilterForm>

          <Sheet>
            <Gutter>
              <GutterHead />
              {rows.map((row, i) => (
                <OutlineRow key={i} $height={row.height}>
                  {row.tree.split("").map((mark, level) => (
                    <OutlineCell key={level} $mark={mark}>
                      {mark === "-" && (
                        <OutlineToggle type="button" aria-label="collapse">
                          <Svg width="7" height="2" viewBox="0 0 7 2">
                            <path d="M0 1h7" stroke="#6b5c2c" />
                          </Svg>
                        </OutlineToggle>
                      )}
                    </OutlineCell>
                  ))}
                </OutlineRow>
              ))}
            </Gutter>

            <Cells>
              <Table>
                <colgroup>
                  <Col $width="5px" />
                  <Col $width="120px" />
                  <Col $width="193px" />
                  <Col $width="109px" />
                  <Col $width="109px" />
                  <Col $width="108px" />
                  <col />
                </colgroup>
                <thead>
                  <tr>
                    <HeadCell $blank="#fffcf0" />
                    <HeadCell colSpan={2} $first>
                      Группировки
                    </HeadCell>
                    <HeadCell>На начало периода</HeadCell>
                    <HeadCell>Итого</HeadCell>
                    <HeadCell>01.02.2008 г.</HeadCell>
                    <HeadCell $blank="#ffffff" />
                  </tr>
                </thead>
                <tbody>
                  {rows.map((row, i) => (
                    <SheetRow key={i} row={row} index={i} selected={selected} onSelect={setSelected} />
                  ))}
                </tbody>
              </Table>
            </Cells>

            <ScrollBar $vertical>
              <ScrollArrow $vertical aria-label="scroll up">
                <ScrollGlyph d="M4 1l3.500 6h-7z" />
              </ScrollArrow>
              <ScrollTrack $vertical>
                <ScrollThumb $vertical>
                  <ScrollGlyph d="M2 3h4v1H3v2H2z" color="#c9c39c" />
                </ScrollThumb>
              </ScrollTrack>
              <ScrollArrow $vertical $end aria-label="scroll down">
                <ScrollGlyph d="M4 7L.5 1h7z" />
              </ScrollArrow>
            </ScrollBar>

            <ScrollBar>
              <ScrollArrow aria-label="scroll left">
                <ScrollGlyph d="M1 4l6-3v6z" color="#c4c0b0" />
              </ScrollArrow>
              <ScrollTrack>
                <ScrollThumb>
                  <ScrollGlyph d="M2 3h4v1H3v2H2z" color="#c9c39c" />
                </ScrollThumb>
              </ScrollTrack>
              <ScrollArrow $end aria-label="scroll right">
                <ScrollGlyph d="M7 4L1 1v6z" />
              </ScrollArrow>
            </ScrollBar>
            <Corner />
          </Sheet>
        </ReportWindow>

        <WindowList>
          <WindowTab type="button">
            <Icon size={14}>{icons.form}</Icon>
            Заявки на расходование ср...
          </WindowTab>
          <WindowTab type="button" $active>
            <Icon size={14}>{icons.report}</Icon>
            Платежный календарь (Фе...
          </WindowTab>
        </WindowList>

        <StatusBar>
          <StatusPanel $wide>
            <Svg width="18" height="3" viewBox="0 0 18 3">
              <path d="M0 3q9-5 18 0z" fill="#2f6ea4" />
            </Svg>
          </StatusPanel>
          <StatusPanel>CAP</StatusPanel>
          <StatusPanel>NUM</StatusPanel>
        </StatusBar>
      </Window>
    </Desktop>
  )
}
